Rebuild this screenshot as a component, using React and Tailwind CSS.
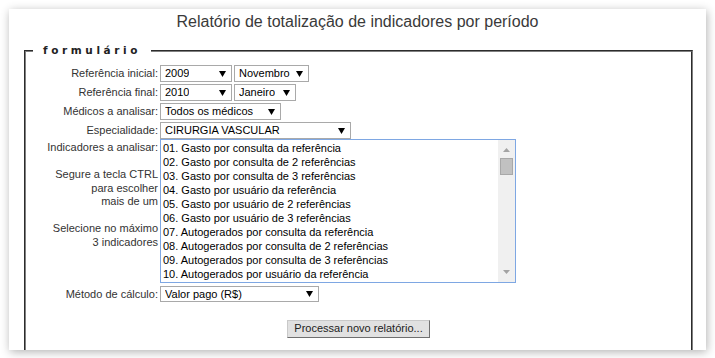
const indicadores = [
  '01. Gasto por consulta da referência',
  '02. Gasto por consulta de 2 referências',
  '03. Gasto por consulta de 3 referências',
  '04. Gasto por usuário da referência',
  '05. Gasto por usuário de 2 referências',
  '06. Gasto por usuário de 3 referências',
  '07. Autogerados por consulta da referência',
  '08. Autogerados por consulta de 2 referências',
  '09. Autogerados por consulta de 3 referências',
  '10. Autogerados por usuário da referência',
]

function Arrow() {
  return (
    <svg width="7" height="6" viewBox="0 0 7 6" className="shrink-0">
      <path d="M0 0h7L3.5 6z" fill="#000" />
    </svg>
  )
}

function Select({ value, className = '' }) {
  return (
    <div
      className={`flex items-center justify-between h-[17px] border border-[#a9a9a9] bg-white pl-[4px] pr-[5px] text-black ${className}`}
    >
      <span className="whitespace-nowrap overflow-hidden">{value}</span>
      <Arrow />
    </div>
  )
}

function Row({ label, children, className = '' }) {
  return (
    <div className={`flex items-center ${className}`}>
      <div className="w-[134px] pr-[2px] text-right text-[#333] whitespace-nowrap">{label}</div>
      <div className="flex gap-[2px]">{children}</div>
    </div>
  )
}

function Listbox() {
  return (
    <div className="flex w-[356px] h-[144px] border border-[#7ea7e3] bg-white">
      <div className="flex-1 pt-[1px] pl-[2px] overflow-hidden text-black leading-[14px]">
        {indicadores.map((t) => (
          <div key={t} className="whitespace-nowrap h-[14px]">{t}</div>
        ))}
      </div>
      <div className="w-[17px] bg-[#f0f0f0] flex flex-col items-center">
        <svg width="7" height="4" viewBox="0 0 7 4" className="mt-[8px]">
          <path d="M0 4h7L3.5 0z" fill="#a3a3a3" />
        </svg>
        <div className="mt-[6px] w-[13px] h-[17px] bg-[#c1c1c1] border border-[#a8a8a8]" />
        <div className="flex-1" />
        <svg width="7" height="4" viewBox="0 0 7 4" className="mb-[8px]">
          <path d="M0 0h7L3.5 4z" fill="#a3a3a3" />
        </svg>
      </div>
    </div>
  )
}

export default function App() {
  return (
    <div className="w-[715px] h-[358px] bg-white pt-[9px] pl-[9px]">
      <div className="w-[697px] h-[341px] bg-white overflow-hidden shadow-[1px_2px_9px_rgba(0,0,0,0.3)] font-['Liberation_Sans',Arial,sans-serif]">
        <h1 className="pt-[3px] text-center text-[16px] leading-[20px] text-[#3a3a3a]">
          Relatório de totalização de indicadores por período
        </h1>
        <fieldset className="ml-[15px] mt-[12px] w-[669px] border-2 [border-style:groove] border-[#808080] pb-[30px] text-[11px]">
          <legend className="ml-[7px] px-[10px] font-['DejaVu_Sans',sans-serif] font-bold text-[10.5px] leading-[13px] tracking-[3.6px] text-[#222]">
            formulário
          </legend>
          <div className="flex flex-col pt-[8px]">
            <Row label="Referência inicial:">
              <Select value="2009" className="w-[72px]" />
              <Select value="Novembro" className="w-[75px]" />
            </Row>
            <Row label="Referência final:" className="mt-[2px]">
              <Select value="2010" className="w-[72px]" />
              <Select value="Janeiro" className="w-[62px]" />
            </Row>
            <Row label="Médicos a analisar:" className="mt-[2px]">
              <Select value="Todos os médicos" className="w-[121px]" />
            </Row>
            <Row label="Especialidade:" className="mt-[2px]">
              <Select value="CIRURGIA VASCULAR" className="w-[191px]" />
            </Row>
            <div className="flex items-start">
              <div className="w-[134px] pr-[2px] pt-[2px] text-right text-[#333] leading-[13.5px] whitespace-nowrap">
                Indicadores a analisar:
                <br />
                <br />
                Segure a tecla CTRL
                <br />
                para escolher
                <br />
                mais de um
                <br />
                <br />
                Selecione no máximo
                <br />
                3 indicadores
              </div>
              <Listbox />
            </div>
            <Row label="Método de cálculo:" className="mt-[3px]">
              <Select value="Valor pago (R$)" className="w-[159px] !h-[16px]" />
            </Row>
            <div className="flex justify-center mt-[17px]">
              <button className="w-[143px] h-[18px] bg-[#e1e1e1] border border-t-[#c9c9c9] border-l-[#c9c9c9] border-r-[#6f6f6f] border-b-[#6f6f6f] text-[11px] text-[#222] leading-none">
                Processar novo relatório...
              </button>
            </div>
          </div>
        </fieldset>
      </div>
    </div>
  )
}
